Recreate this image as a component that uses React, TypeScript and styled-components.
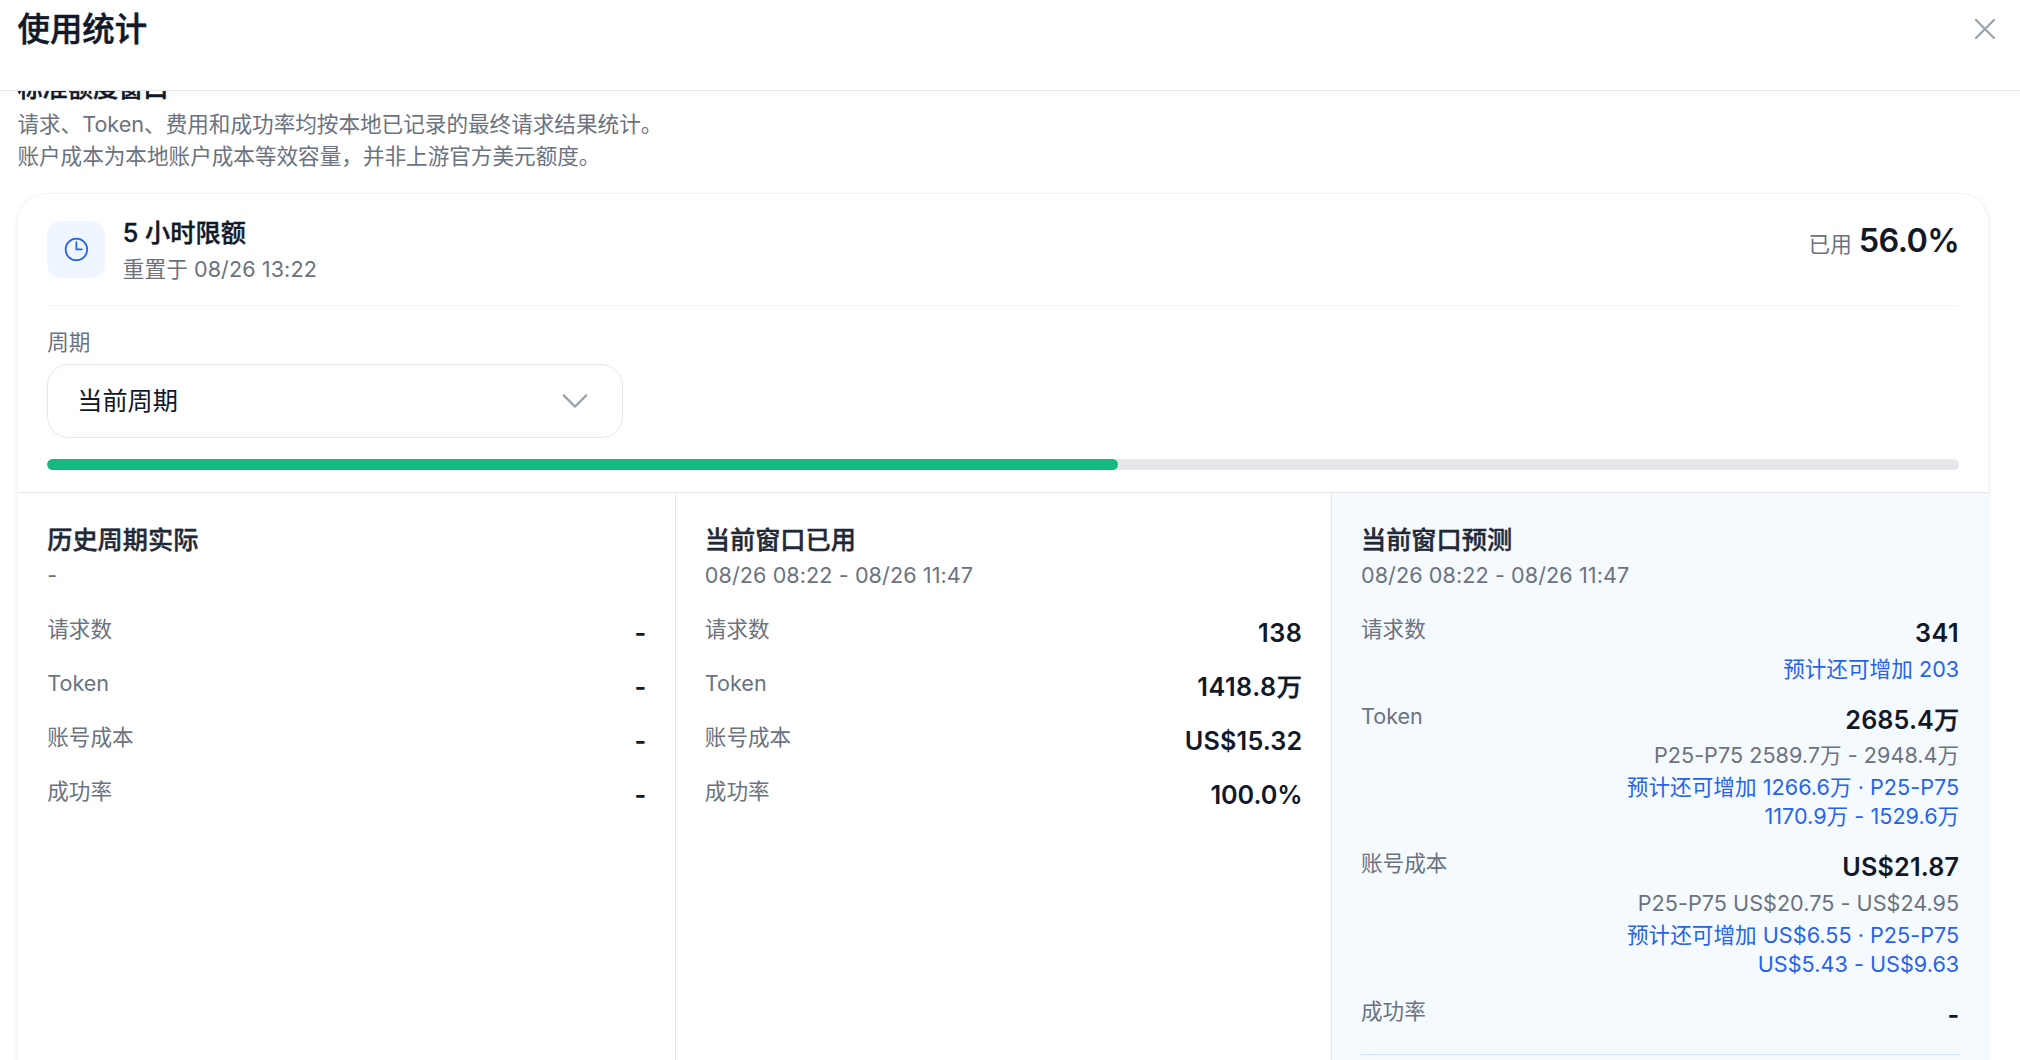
import React from 'react';
import styled, { createGlobalStyle } from 'styled-components';

const GlobalStyle = createGlobalStyle`
  *, *::before, *::after { box-sizing: border-box; }
  body {
    margin: 0;
    background: #ffffff;
    color: #111827;
    font-family: Inter, "Noto Sans CJK SC", sans-serif;
    font-size: 21.6px;
    line-height: 28.8px;
    overflow: hidden;
  }
  h2, h3, h4, p { margin: 0; }
`;

const Dialog = styled.main`
  display: flex;
  flex-direction: column;
  height: 1060px;
  overflow: hidden;
  background: #ffffff;
`;

const Header = styled.header`
  display: flex;
  align-items: flex-start;
  justify-content: space-between;
  flex: none;
  height: 91px;
  padding: 5px 17px 0 17.5px;
  border-bottom: 1px solid #e5e7eb;
`;

const DialogTitle = styled.h2`
  font-size: 32.4px;
  line-height: 50.4px;
  font-weight: 500;
  -webkit-text-stroke: 0.5px currentColor;
`;

const CloseButton = styled.button`
  display: flex;
  margin: 6px 0 0;
  padding: 0;
  border: 0;
  background: transparent;
  color: #9ca3af;
`;

const Scroll = styled.div`
  flex: 1;
  min-height: 0;
  overflow: hidden;
`;

const Content = styled.div`
  margin-top: -21px;
  padding: 0 31px 0 17.4px;
`;

const SectionTitle = styled.h3`
  font-size: 25.2px;
  line-height: 36px;
  font-weight: 500;
  -webkit-text-stroke: 0.4px currentColor;
`;

const Intro = styled.p`
  margin-top: 2px;
  line-height: 32.4px;
  color: #6b7280;
`;

const Card = styled.section`
  margin-top: 20.2px;
  border: 1px solid #f3f4f6;
  border-radius: 28.8px;
  background: #ffffff;
  box-shadow: 0 2px 5px rgba(0, 0, 0, 0.06);
  overflow: hidden;
`;

const CardTop = styled.div`
  padding: 21.4px 28.8px 21.6px;
`;

const CardHeader = styled.div`
  display: flex;
  align-items: flex-start;
  justify-content: space-between;
  padding-bottom: 21.6px;
  border-bottom: 1px solid #f3f4f6;
`;

const Identity = styled.div`
  display: flex;
  align-items: center;
  gap: 18px;
`;

const IconTile = styled.div`
  display: flex;
  align-items: center;
  justify-content: center;
  width: 57.6px;
  height: 57.6px;
  border-radius: 14.4px;
  background: #eff6ff;
  color: #2563eb;
`;

const BlockTitle = styled.h4<{ $color?: string }>`
  font-size: 25.2px;
  line-height: 36px;
  font-weight: 500;
  -webkit-text-stroke: 0.4px currentColor;
  color: ${({ $color }) => $color ?? '#111827'};
`;

const Caption = styled.p`
  margin-top: 3.6px;
  letter-spacing: 0.08px;
  color: #6b7280;
`;

const Used = styled.div`
  height: 50.4px;
  padding-top: 1px;
  line-height: 50.4px;
  color: #6b7280;
`;

const UsedValue = styled.span`
  margin-left: 7px;
  font-size: 32.4px;
  font-weight: 600;
  letter-spacing: -0.6px;
  color: #111827;
`;

const FieldLabel = styled.div`
  margin-top: 21.6px;
  color: #6b7280;
`;

const Select = styled.button`
  display: flex;
  align-items: center;
  justify-content: space-between;
  width: 576px;
  height: 73.8px;
  margin: 7.2px 0 21.6px;
  padding: 1px 29px 0;
  border: 1px solid #e5e7eb;
  border-radius: 21.6px;
  background: #ffffff;
  color: #111827;
  font: inherit;
  font-size: 25.2px;
`;

const ChevronSlot = styled.span`
  display: flex;
  color: #9ca3af;
`;

const Track = styled.div`
  height: 10.8px;
  border-radius: 5.4px;
  background: #e5e7eb;
  overflow: hidden;
`;

const Fill = styled.div`
  height: 100%;
  border-radius: 5.4px;
  background: #14b881;
`;

const Columns = styled.div`
  display: grid;
  grid-template-columns: 656.6px 655.2px 1fr;
  gap: 1px;
  border-top: 1px solid #e5e7eb;
  background: #e5e7eb;
`;

const Column = styled.div<{ $forecast?: boolean }>`
  height: 620px;
  padding: 28.8px;
  background: ${({ $forecast }) => ($forecast ? '#f5faff' : '#ffffff')};
`;

const Rows = styled.div`
  display: flex;
  flex-direction: column;
  gap: 18px;
  margin-top: 25.2px;
`;

const Row = styled.div`
  display: flex;
  align-items: flex-start;
  justify-content: space-between;
`;

const RowLabel = styled.span`
  color: #6b7280;
`;

const RowValues = styled.div`
  display: flex;
  flex-direction: column;
  gap: 3.6px;
  text-align: right;
`;

const Value = styled.div<{ $tracking?: number }>`
  font-size: 25.2px;
  line-height: 36px;
  font-weight: 600;
  letter-spacing: ${({ $tracking }) => $tracking ?? 0}px;
`;

const Unit = styled.span`
  font-weight: 500;
  -webkit-text-stroke: 0.4px currentColor;
`;

const Note = styled.div<{ $accent?: boolean }>`
  white-space: pre-line;
  letter-spacing: 0.03px;
  color: ${({ $accent }) => ($accent ? '#2563eb' : '#6b7280')};
`;

const Divider = styled.div`
  height: 1px;
  margin-top: 21.6px;
  background: #cfe4fb;
`;

const Icon = ({ d, size }: { d: string; size: number }) => (
  <svg
    width={size}
    height={size}
    viewBox="0 0 24 24"
    fill="none"
    stroke="currentColor"
    strokeWidth={1.5}
    strokeLinecap="round"
    strokeLinejoin="round"
  >
    <path d={d} />
  </svg>
);

type Metric = {
  label: string;
  value: string;
  unit?: string;
  tracking?: number;
  range?: string;
  extra?: string;
};
type ColumnData = { title: string; period: string; forecast?: boolean; metrics: Metric[] };

const columns: ColumnData[] = [
  {
    title: '历史周期实际',
    period: '-',
    metrics: [
      { label: '请求数', value: '-' },
      { label: 'Token', value: '-' },
      { label: '账号成本', value: '-' },
      { label: '成功率', value: '-' },
    ],
  },
  {
    title: '当前窗口已用',
    period: '08/26 08:22 - 08/26 11:47',
    metrics: [
      { label: '请求数', value: '138', tracking: 0.5 },
      { label: 'Token', value: '1418.8', unit: '万', tracking: 0.5 },
      { label: '账号成本', value: 'US$15.32', tracking: 0.15 },
      { label: '成功率', value: '100.0%', tracking: -0.1 },
    ],
  },
  {
    title: '当前窗口预测',
    period: '08/26 08:22 - 08/26 11:47',
    forecast: true,
    metrics: [
      { label: '请求数', value: '341', tracking: 0.5, extra: '预计还可增加 203' },
      {
        label: 'Token',
        value: '2685.4',
        unit: '万',
        tracking: 0.1,
        range: 'P25-P75 2589.7万 - 2948.4万',
        extra: '预计还可增加 1266.6万 · P25-P75\n1170.9万 - 1529.6万',
      },
      {
        label: '账号成本',
        value: 'US$21.87',
        tracking: 0.15,
        range: 'P25-P75 US$20.75 - US$24.95',
        extra: '预计还可增加 US$6.55 · P25-P75\nUS$5.43 - US$9.63',
      },
      { label: '成功率', value: '-' },
    ],
  },
];

const usedPercent = 56;

export default function App() {
  return (
    <>
      <GlobalStyle />
      <Dialog>
        <Header>
          <DialogTitle>使用统计</DialogTitle>
          <CloseButton aria-label="关闭">
            <Icon size={36} d="M6 18L18 6M6 6l12 12" />
          </CloseButton>
        </Header>
        <Scroll>
          <Content>
            <SectionTitle>标准额度窗口</SectionTitle>
            <Intro>
              请求、Token、费用和成功率均按本地已记录的最终请求结果统计。
              <br />
              账户成本为本地账户成本等效容量，并非上游官方美元额度。
            </Intro>
            <Card>
              <CardTop>
                <CardHeader>
                  <Identity>
                    <IconTile>
                      <Icon size={28.8} d="M12 6v6h4.5m4.5 0a9 9 0 11-18 0 9 9 0 0118 0z" />
                    </IconTile>
                    <div>
                      <BlockTitle>5 小时限额</BlockTitle>
                      <Caption>重置于 08/26 13:22</Caption>
                    </div>
                  </Identity>
                  <Used>
                    已用
                    <UsedValue>{usedPercent.toFixed(1)}%</UsedValue>
                  </Used>
                </CardHeader>
                <FieldLabel>周期</FieldLabel>
                <Select>
                  当前周期
                  <ChevronSlot>
                    <Icon size={36} d="M19.5 8.25l-7.5 7.5-7.5-7.5" />
                  </ChevronSlot>
                </Select>
                <Track>
                  <Fill style={{ width: `${usedPercent}%` }} />
                </Track>
              </CardTop>
              <Columns>
                {columns.map((column) => (
                  <Column key={column.title} $forecast={column.forecast}>
                    <BlockTitle $color="#1f2937">{column.title}</BlockTitle>
                    <Caption>{column.period}</Caption>
                    <Rows>
                      {column.metrics.map((metric) => (
                        <Row key={metric.label}>
                          <RowLabel>{metric.label}</RowLabel>
                          <RowValues>
                            <Value $tracking={metric.tracking}>
                              {metric.value}
                              {metric.unit && <Unit>{metric.unit}</Unit>}
                            </Value>
                            {metric.range && <Note>{metric.range}</Note>}
                            {metric.extra && <Note $accent>{metric.extra}</Note>}
                          </RowValues>
                        </Row>
                      ))}
                    </Rows>
                    {column.forecast && <Divider />}
                  </Column>
                ))}
              </Columns>
            </Card>
          </Content>
        </Scroll>
      </Dialog>
    </>
  );
}
